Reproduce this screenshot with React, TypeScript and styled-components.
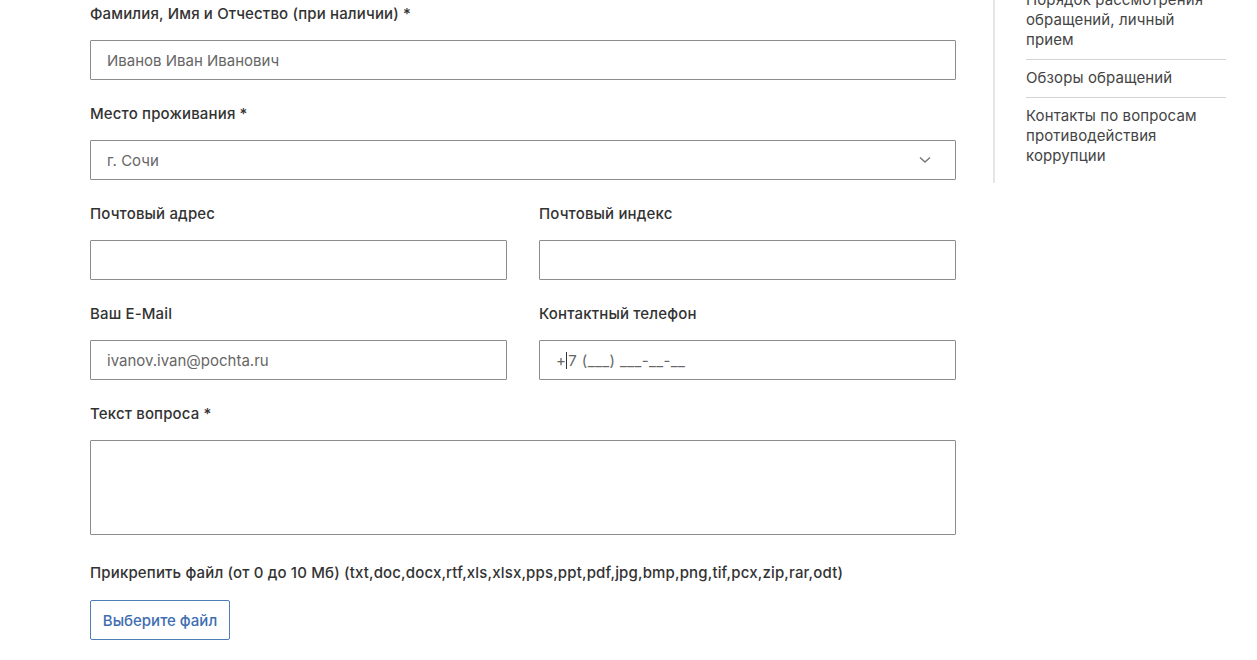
import styled, { createGlobalStyle } from "styled-components";

const Global = createGlobalStyle`
  html, body {
    margin: 0;
    padding: 0;
    background: #fff;
  }
  body {
    font-family: Inter, "Noto Sans", "Liberation Sans", sans-serif;
    color: #333;
  }
`;

const Page = styled.div`
  display: flex;
  align-items: flex-start;
  padding-left: 90px;
  height: 660px;
  overflow: hidden;
`;

const Form = styled.form`
  width: 866px;
  padding-top: 4px;
  display: flex;
  flex-direction: column;
`;

const Row = styled.div`
  display: grid;
  grid-template-columns: 1fr 1fr;
  column-gap: 32px;
`;

const Field = styled.div<{ $last?: boolean }>`
  display: flex;
  flex-direction: column;
  margin-bottom: ${(p) => (p.$last ? "28px" : "24px")};
`;

const Label = styled.label`
  font-size: 15px;
  line-height: 20px;
  font-weight: 500;
  letter-spacing: 0.15px;
  color: #333;
  margin-bottom: 16px;
  white-space: nowrap;
`;

const Box = styled.div`
  position: relative;
  box-sizing: border-box;
  height: 40px;
  border: 1px solid #8c8c8c;
  border-radius: 1px;
  padding: 0 16px;
  display: flex;
  align-items: center;
  font-size: 15px;
  color: #666;
`;

const TextBox = styled(Box)`
  height: 95px;
`;

const Chevron = styled.svg`
  position: absolute;
  right: 24px;
  top: 15px;
`;

const Caret = styled.span`
  display: inline-block;
  width: 1px;
  height: 17px;
  background: #333;
  margin: 0 1px 0 0;
`;

const Phone = styled.span`
  display: flex;
  align-items: center;
  font-size: 15px;
  color: #666;
  letter-spacing: 0.4px;
`;

const FileLabel = styled(Label)`
  margin-bottom: 17px;
`;

const FileButton = styled.button`
  width: 140px;
  height: 40px;
  box-sizing: border-box;
  border: 1px solid #4f7db8;
  border-radius: 2px;
  background: #fff;
  color: #3e6eb0;
  font-family: inherit;
  font-size: 15px;
  font-weight: 500;
  padding: 0;
  cursor: pointer;
`;

const Aside = styled.aside`
  margin-left: 37px;
  margin-top: -10px;
  border-left: 2px solid #e6e6e6;
  padding: 0 31px 8px 31px;
`;

const NavList = styled.ul`
  list-style: none;
  margin: 0;
  padding: 0;
  width: 200px;
`;

const NavItem = styled.li`
  padding: 8px 0 9px;
  border-bottom: 1px solid #d4d4d4;
  font-size: 15px;
  line-height: 20px;
  letter-spacing: 0.1px;
  color: #444;
  &:first-child {
    padding-top: 0;
  }
  &:last-child {
    border-bottom: none;
  }
`;

const App = () => {
  return (
    <Page>
      <Global />
      <Form>
        <Field>
          <Label>Фамилия, Имя и Отчество (при наличии) *</Label>
          <Box>Иванов Иван Иванович</Box>
        </Field>
        <Field>
          <Label>Место проживания *</Label>
          <Box>
            г. Сочи
            <Chevron width="12" height="8" viewBox="0 0 12 8" fill="none">
              <path d="M1 1.5 L6 6 L11 1.5" stroke="#777" strokeWidth="1.4" />
            </Chevron>
          </Box>
        </Field>
        <Row>
          <Field>
            <Label>Почтовый адрес</Label>
            <Box />
          </Field>
          <Field>
            <Label>Почтовый индекс</Label>
            <Box />
          </Field>
        </Row>
        <Row>
          <Field>
            <Label>Ваш E-Mail</Label>
            <Box>ivanov.ivan@pochta.ru</Box>
          </Field>
          <Field>
            <Label>Контактный телефон</Label>
            <Box>
              <Phone>
                +<Caret />7 (___) ___-__-__
              </Phone>
            </Box>
          </Field>
        </Row>
        <Field $last>
          <Label>Текст вопроса *</Label>
          <TextBox />
        </Field>
        <FileLabel>
          Прикрепить файл (от 0 до 10 Мб)
          (txt,doc,docx,rtf,xls,xlsx,pps,ppt,pdf,jpg,bmp,png,tif,pcx,zip,rar,odt)
        </FileLabel>
        <div>
          <FileButton type="button">Выберите файл</FileButton>
        </div>
      </Form>
      <Aside>
        <NavList>
          <NavItem>Порядок рассмотрения обращений, личный прием</NavItem>
          <NavItem>Обзоры обращений</NavItem>
          <NavItem>Контакты по вопросам противодействия коррупции</NavItem>
        </NavList>
      </Aside>
    </Page>
  );
};

export default App;
